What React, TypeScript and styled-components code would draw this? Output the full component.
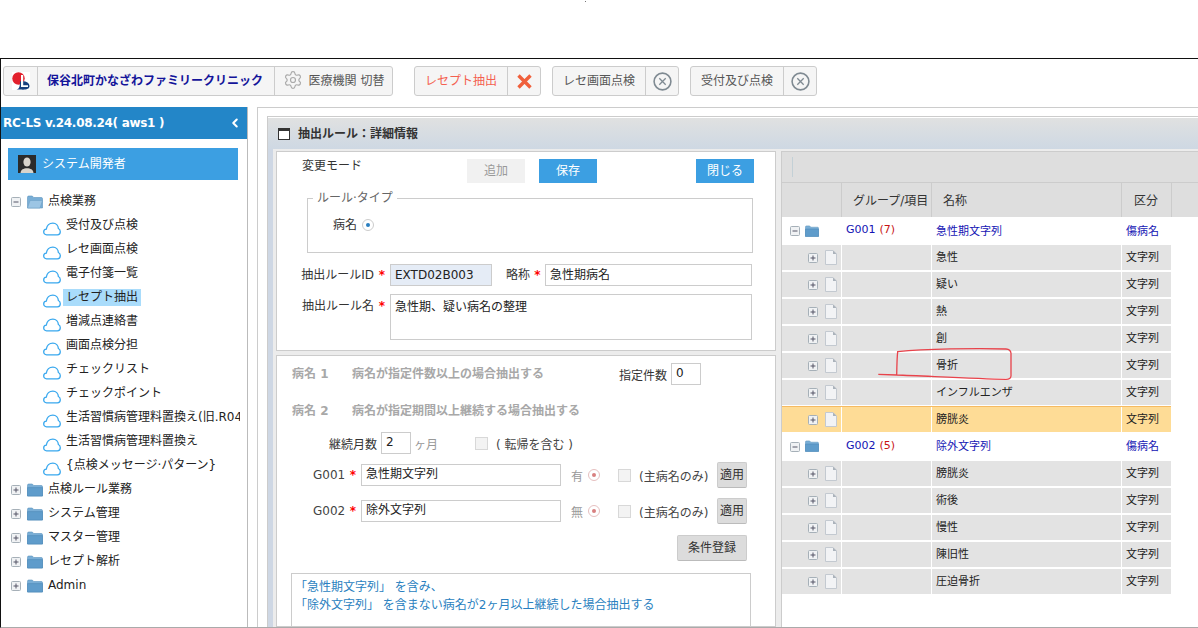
import React from 'react';
import styled, { createGlobalStyle } from 'styled-components';
import { ChevronLeft, Settings } from 'lucide-react';

const GlobalStyle = createGlobalStyle`
  html, body {
    margin: 0;
    padding: 0;
    height: 628px;
    overflow: hidden;
    background: #fff;
    font-family: "DejaVu Sans", "Noto Sans CJK JP", sans-serif;
    font-size: 12px;
    color: #222;
  }
  * { box-sizing: border-box; }
`;

const Page = styled.div`
  position: relative;
  width: 1198px;
  height: 628px;
  overflow: hidden;
`;

const TopBlank = styled.div`
  height: 58px;
  padding: 1px 0 0 585px;
`;

const Speck = styled.div`
  width: 1px;
  height: 1px;
  background: #777;
`;

const Frame = styled.div`
  height: 570px;
  border-top: 1px solid #111;
  border-left: 1px solid #111;
  border-bottom: 1px solid #aaa;
  display: flex;
  flex-direction: column;
`;

const Toolbar = styled.div`
  height: 48px;
  flex: none;
  display: flex;
  padding: 7px 0 0 2px;
  gap: 11px;
`;

const ToolGroup = styled.div<{ $first?: boolean }>`
  height: 30px;
  display: flex;
  align-items: stretch;
  background: #f5f5f5;
  border: 1px solid #ccc;
  border-radius: 3px;
  margin-right: ${p => (p.$first ? '10px' : '0')};
`;

const ToolCell = styled.div<{ $w: number; $tone?: 'name' | 'danger'; $icon?: boolean }>`
  width: ${p => p.$w}px;
  display: flex;
  align-items: center;
  justify-content: center;
  gap: 6px;
  padding: 0 ${p => (p.$tone === 'name' ? '2px' : '0')} ${p => (p.$icon ? '0' : '3px')} 0;
  white-space: nowrap;
  font-weight: ${p => (p.$tone === 'name' ? 700 : 400)};
  color: ${p => (p.$tone === 'name' ? '#14149a' : p.$tone === 'danger' ? '#f4604f' : '#555')};
  & + & { border-left: 1px solid #ccc; }
  svg { flex: none; }
`;

const Main = styled.div`
  flex: 1;
  min-height: 0;
  display: flex;
`;

const Sidebar = styled.aside`
  width: 247px;
  flex: none;
  border-right: 1px solid #bbb;
`;

const SideHeader = styled.div`
  height: 32px;
  background: #2386c8;
  color: #fff;
  display: flex;
  align-items: center;
  justify-content: space-between;
  padding: 0 5px 0 2px;
  font-size: 12px;
  font-weight: 700;
  letter-spacing: -0.3px;
`;

const UserBlock = styled.div`
  margin: 9px 9px 0 7px;
  height: 32px;
  background: #3c9fe2;
  color: #fff;
  display: flex;
  align-items: center;
  gap: 6px;
  padding-left: 10px;
  span { margin-bottom: 4px; }
`;

const Tree = styled.div`
  margin-top: 10px;
`;

const TreeRow = styled.div<{ $child?: boolean }>`
  height: 24px;
  display: flex;
  align-items: center;
  padding-left: ${p => (p.$child ? '42px' : '10px')};
  gap: ${p => (p.$child ? '2px' : '6px')};
  color: #222;
`;

const TreeLabel = styled.span<{ $active?: boolean; $root?: boolean }>`
  padding: 0 3px;
  margin-left: ${p => (p.$root ? '-4px' : '0')};
  margin-top: -1px;
  line-height: 17px;
  max-width: 177px;
  overflow: hidden;
  white-space: nowrap;
  background: ${p => (p.$active ? '#a9dcfb' : 'transparent')};
`;

const Content = styled.div`
  flex: 1;
  min-width: 0;
  margin-left: 9px;
  border-left: 1px solid #ccc;
  border-top: 1px solid #ccc;
  padding: 8px 0 0 9px;
`;

const Panel = styled.section`
  height: 100%;
  border: 1px solid #ccc;
  border-bottom: 0;
  border-right: 0;
  display: flex;
  flex-direction: column;
`;

const PanelHead = styled.div`
  height: 31px;
  flex: none;
  margin-top: 1px;
  display: flex;
  align-items: center;
  gap: 8px;
  padding-left: 10px;
  background: linear-gradient(#e0e1e1, #ced8e3);
  color: #333;
  font-weight: 700;
  span { margin-bottom: 2px; }
`;

const PanelBody = styled.div`
  flex: 1;
  min-height: 0;
  display: flex;
  background: #ececec;
  border-left: 5px solid #ced7e4;
  padding: 2px 0 0 3px;
  overflow: hidden;
`;

const LeftColumn = styled.div`
  width: 500px;
  flex: none;
  display: flex;
  flex-direction: column;
  gap: 4px;
`;

const Card = styled.div<{ $h?: number }>`
  background: #fff;
  border: 1px solid #ccc;
  height: ${p => (p.$h ? `${p.$h}px` : 'auto')};
  flex: ${p => (p.$h ? 'none' : '1')};
  min-height: 0;
  overflow: hidden;
`;

const ActionRow = styled.div`
  display: flex;
  margin-top: 7px;
`;

const ModeLabel = styled.div`
  width: 165px;
  margin-left: 25px;
  line-height: 14px;
  color: #333;
`;

const ActionButton = styled.div<{ $off?: boolean; $gap?: number }>`
  width: 58px;
  height: 24px;
  margin-left: ${p => p.$gap ?? 0}px;
  display: flex;
  align-items: center;
  justify-content: center;
  padding-bottom: 3px;
  background: ${p => (p.$off ? '#f1f1f1' : '#3c9fe2')};
  color: ${p => (p.$off ? '#999' : '#fff')};
`;

const TypeBox = styled.fieldset`
  margin: 8px 0 0 30px;
  padding: 0;
  width: 446px;
  height: 62px;
  border: 1px solid #ccc;
`;

const TypeLegend = styled.legend`
  margin-left: 5px;
  padding: 0 4px;
  line-height: 14px;
  color: #666;
`;

const TypeRow = styled.div`
  margin: 13px 0 0 25px;
  display: flex;
  align-items: center;
  gap: 5px;
  line-height: 14px;
  color: #333;
`;

const RadioMark = styled.span<{ $faded?: boolean; $gap?: number }>`
  width: 12px;
  height: 12px;
  flex: none;
  margin-left: ${p => p.$gap ?? 0}px;
  border-radius: 50%;
  border: 1px solid ${p => (p.$faded ? '#e6c0c0' : '#ccc')};
  display: flex;
  align-items: center;
  justify-content: center;
  &::after {
    content: '';
    width: 4px;
    height: 4px;
    border-radius: 50%;
    background: ${p => (p.$faded ? '#d98080' : '#2a7fc0')};
  }
`;

const FieldRow = styled.div<{ $top: number; $left?: number; $start?: boolean }>`
  display: flex;
  align-items: ${p => (p.$start ? 'flex-start' : 'center')};
  margin: ${p => p.$top}px 0 0 ${p => p.$left ?? 0}px;
`;

const FieldLabel = styled.div<{ $w: number; $gap?: number; $top?: number }>`
  width: ${p => p.$w}px;
  flex: none;
  margin-left: ${p => p.$gap ?? 0}px;
  padding-top: ${p => p.$top ?? 0}px;
  line-height: 14px;
  text-align: right;
  white-space: nowrap;
  color: #333;
`;

const Star = styled.span<{ $w: number; $top?: number }>`
  width: ${p => p.$w}px;
  flex: none;
  padding-top: ${p => p.$top ?? 0}px;
  line-height: 14px;
  text-align: center;
  color: #f00;
  font-weight: 700;
`;

const Field = styled.div<{ $w: number; $h?: number; $locked?: boolean; $tight?: boolean; $gap?: number }>`
  width: ${p => p.$w}px;
  height: ${p => p.$h ?? 22}px;
  flex: none;
  margin-left: ${p => p.$gap ?? 0}px;
  border: 1px solid #ccc;
  background: ${p => (p.$locked ? '#e5ecf6' : '#fff')};
  padding: ${p => (p.$h ? '4px 4px' : '0 4px')};
  line-height: ${p => (p.$h ? '16px' : p.$tight ? '18px' : '20px')};
  color: #222;
  white-space: nowrap;
`;

const Rule = styled.div<{ $w: number }>`
  width: ${p => p.$w}px;
  height: 22px;
  line-height: 22px;
  flex: none;
  font-weight: 700;
  color: #a8a8a8;
  white-space: nowrap;
`;

const Plain = styled.span<{ $gap?: number; $w?: number; $tone?: string }>`
  flex: none;
  width: ${p => (p.$w ? `${p.$w}px` : 'auto')};
  margin-left: ${p => p.$gap ?? 0}px;
  color: ${p => p.$tone ?? '#444'};
  white-space: nowrap;
`;

const CheckBox = styled.span<{ $gap: number }>`
  width: 13px;
  height: 13px;
  flex: none;
  margin-left: ${p => p.$gap}px;
  background: #f3f3f3;
  border: 1px solid #d8d8d8;
`;

const GrayButton = styled.div<{ $w: number; $gap?: number; $inline?: boolean }>`
  width: ${p => p.$w}px;
  height: 26px;
  flex: none;
  margin: ${p => (p.$inline ? '-2px' : '0')} 0 ${p => (p.$inline ? '-2px' : '0')} ${p => p.$gap ?? 0}px;
  display: flex;
  align-items: center;
  justify-content: center;
  padding-bottom: 3px;
  background: #dcdcdc;
  border: 1px solid #ccc;
  border-bottom-color: #bbb;
  border-radius: 2px;
  color: #333;
`;

const NoteBox = styled.div`
  margin: 12px 0 0 14px;
  width: 460px;
  height: 90px;
  border: 1px solid #ccc;
  padding: 4px 3px;
  line-height: 18px;
  color: #2a7fc0;
`;

const GridPanel = styled.div`
  flex: 1;
  min-width: 0;
  margin-left: 5px;
  background: #fff;
  border-left: 1px solid #ccc;
  border-top: 1px solid #ccc;
`;

const GridTools = styled.div`
  height: 31px;
  display: flex;
  align-items: center;
  padding-left: 10px;
  background: #dedede;
  border-bottom: 1px solid #ccc;
  &::before {
    content: '';
    width: 1px;
    height: 20px;
    background: #c3d0d6;
  }
`;

const GridHead = styled.div`
  height: 34px;
  display: grid;
  grid-template-columns: 60px 90px 190px 50px 1fr;
  background: #dedede;
`;

const HeadCell = styled.div<{ $pad?: number }>`
  display: flex;
  align-items: center;
  padding-left: ${p => p.$pad ?? 0}px;
  padding-bottom: 2px;
  border-right: 1px solid #ccc;
  white-space: nowrap;
  color: #333;
  &:last-child { border-right: 0; }
`;

const GridRow = styled.div<{ $kind: 'group' | 'item' | 'picked'; $h?: number }>`
  height: ${p => p.$h ?? 25}px;
  width: 389px;
  margin-bottom: ${p => (p.$kind === 'group' ? 0 : 2)}px;
  display: grid;
  grid-template-columns: 59px 89px 189px 49px;
  gap: 1px;
  font-size: 11px;
  color: ${p => (p.$kind === 'group' ? '#1414b4' : '#222')};
  ${p => p.$kind === 'picked' && 'margin-bottom: 0; border-top: 1px solid #f6bb62; margin-top: -1px; height: 26px;'}
`;

const GridCell = styled.div<{ $kind: 'group' | 'item' | 'picked'; $pad?: number; $gap?: number }>`
  display: flex;
  align-items: center;
  gap: ${p => p.$gap ?? 5}px;
  padding-left: ${p => p.$pad ?? 4}px;
  padding-bottom: ${p => (p.$pad ? 0 : 3)}px;
  white-space: nowrap;
  background: ${p => (p.$kind === 'group' ? '#fff' : p.$kind === 'picked' ? '#fedc96' : '#e3e3e3')};
`;

const Count = styled.span`
  color: #c81414;
  margin-left: 4px;
`;

const Scribble = styled.svg`
  position: absolute;
  left: 875px;
  top: 345px;
  pointer-events: none;
`;

const Expander: React.FC<{ open?: boolean }> = ({ open }) => (
  <svg width="10" height="10" viewBox="0 0 10 10" style={{ flex: 'none' }}>
    <rect x="0.5" y="0.5" width="9" height="9" rx="1" fill="#f0f2f4" stroke="#a6b0b8" />
    <path d={open ? 'M2.5 5h5' : 'M2.5 5h5M5 2.5v5'} stroke="#556" strokeWidth="1" />
  </svg>
);

const Folder: React.FC<{ open?: boolean; w?: number }> = ({ open, w = 16 }) => (
  <svg width={w} height={w * 0.875} viewBox="0 0 16 14" style={{ flex: 'none' }}>
    <path d="M0.5 2.2C0.5 1.5 1 1 1.7 1h3.6l1.4 1.5h7.6c.7 0 1.2.5 1.2 1.2V13H.5z" fill="#79aed6" stroke="#5c93bd" strokeWidth="0.6" />
    {open ? (
      <path d="M3 5.5h12.5L13 13H.5z" fill="#9cc5e4" stroke="#6ea1c8" strokeWidth="0.6" />
    ) : (
      <path d="M.5 4.6h15V13H.5z" fill="#5f9ccb" stroke="#4f8ab8" strokeWidth="0.6" />
    )}
  </svg>
);

const CloudMark = () => (
  <svg width="18" height="14" viewBox="0 0 18 14" fill="none" style={{ flex: 'none', marginTop: 5 }}>
    <path
      d="M3.6 12.8C1.7 12.8.7 11.3.7 9.9.7 8.3 1.9 7.2 3.3 7.1 3.9 3.6 6.6 1.1 9.9 1.1 13 1.1 15.2 3.6 15.4 6.5 16.6 7.1 17.3 8.3 17.3 9.8 17.3 11.6 16 12.8 14.4 12.8Z"
      stroke="#39a8ee"
      strokeWidth="1.3"
    />
  </svg>
);

const DocIcon = () => (
  <svg width="12" height="15" viewBox="0 0 12 15" style={{ flex: 'none' }}>
    <path d="M.5.5h7.5l3.5 3.5v10.5H.5z" fill="#f2f3f5" stroke="#c3c9d0" />
    <path d="M8 .5v3.5h3.5z" fill="#aab2ba" />
  </svg>
);

const Logo = () => (
  <svg width="18" height="18" viewBox="0 0 18 18">
    <rect width="18" height="18" fill="#fff" />
    <circle cx="6.5" cy="6.5" r="6.2" fill="#e2202c" />
    <path d="M8 9.5c5-1 9.5 1 9.5 4.5S13 18 8 17.5h-3.5c2-.6 3.5-1.5 3.5-8z" fill="#17407e" />
    <path d="M9 3h2.2v10.2H16v1.8H9z" fill="#fff" />
  </svg>
);

const RedCross = () => (
  <svg width="15" height="15" viewBox="0 0 15 15">
    <path d="M1.5 1.5l12 12M13.5 1.5l-12 12" stroke="#f0603c" strokeWidth="3.4" />
  </svg>
);

const CircleCross = () => (
  <svg width="19" height="19" viewBox="0 0 19 19">
    <circle cx="9.5" cy="9.5" r="8.4" fill="#f5f5f5" stroke="#7f8a92" strokeWidth="1.6" />
    <path d="M6.3 6.3l6.4 6.4M12.7 6.3l-6.4 6.4" stroke="#7f8a92" strokeWidth="1.3" />
  </svg>
);

const Avatar = () => (
  <svg width="18" height="18" viewBox="0 0 18 18" style={{ flex: 'none' }}>
    <rect width="18" height="18" fill="#2b2b2b" />
    <ellipse cx="9" cy="7" rx="3.6" ry="4.6" fill="#d9d4cc" />
    <path d="M2.5 18c.3-3.6 3-4.6 6.5-4.8 3.5.2 6.2 1.2 6.5 4.8z" fill="#d9d4cc" />
  </svg>
);

const PanelIcon = () => (
  <svg width="12" height="12" viewBox="0 0 12 12">
    <rect x="0.5" y="0.5" width="11" height="11" fill="#fff" stroke="#333" />
    <rect width="12" height="3" fill="#333" />
  </svg>
);

const checkItems = [
  '受付及び点検',
  'レセ画面点検',
  '電子付箋一覧',
  'レセプト抽出',
  '増減点連絡書',
  '画面点検分担',
  'チェックリスト',
  'チェックポイント',
  '生活習慣病管理料置換え(旧.R04',
  '生活習慣病管理料置換え',
  '{点検メッセージ·パターン}',
];

const closedRoots = ['点検ルール業務', 'システム管理', 'マスター管理', 'レセプト解析', 'Admin'];

const group1 = ['急性', '疑い', '熱', '創', '骨折', 'インフルエンザ'];
const group2 = ['膀胱炎', '術後', '慢性', '陳旧性', '圧迫骨折'];

const ItemRow: React.FC<{ name: string; picked?: boolean }> = ({ name, picked }) => {
  const kind = picked ? 'picked' : 'item';
  return (
    <GridRow $kind={kind}>
      <GridCell $kind={kind} $pad={26} $gap={7}>
        <Expander />
        <DocIcon />
      </GridCell>
      <GridCell $kind={kind} />
      <GridCell $kind={kind}>{name}</GridCell>
      <GridCell $kind={kind}>文字列</GridCell>
    </GridRow>
  );
};

const GroupRow: React.FC<{ code: string; count: number; name: string; h: number }> = ({ code, count, name, h }) => (
  <GridRow $kind="group" $h={h}>
    <GridCell $kind="group" $pad={8}>
      <Expander open />
      <Folder w={14} />
    </GridCell>
    <GridCell $kind="group">
      <span>
        {code}
        <Count>({count})</Count>
      </span>
    </GridCell>
    <GridCell $kind="group">{name}</GridCell>
    <GridCell $kind="group">傷病名</GridCell>
  </GridRow>
);

const App: React.FC = () => (
  <Page>
    <GlobalStyle />
    <TopBlank>
      <Speck />
    </TopBlank>
    <Frame>
      <Toolbar>
        <ToolGroup $first>
          <ToolCell $w={33} $icon>
            <Logo />
          </ToolCell>
          <ToolCell $w={237} $tone="name">保谷北町かなざわファミリークリニック</ToolCell>
          <ToolCell $w={118}>
            <Settings size={20} color="#aaa" strokeWidth={1.4} />
            医療機関 切替
          </ToolCell>
        </ToolGroup>
        <ToolGroup>
          <ToolCell $w={92} $tone="danger">レセプト抽出</ToolCell>
          <ToolCell $w={33} $icon>
            <RedCross />
          </ToolCell>
        </ToolGroup>
        <ToolGroup>
          <ToolCell $w={92}>レセ画面点検</ToolCell>
          <ToolCell $w={33} $icon>
            <CircleCross />
          </ToolCell>
        </ToolGroup>
        <ToolGroup>
          <ToolCell $w={92}>受付及び点検</ToolCell>
          <ToolCell $w={33} $icon>
            <CircleCross />
          </ToolCell>
        </ToolGroup>
      </Toolbar>
      <Main>
        <Sidebar>
          <SideHeader>
            RC-LS v.24.08.24( aws1 )
            <ChevronLeft size={14} strokeWidth={3.5} />
          </SideHeader>
          <UserBlock>
            <Avatar />
            <span>システム開発者</span>
          </UserBlock>
          <Tree>
            <TreeRow>
              <Expander open />
              <Folder open />
              <TreeLabel $root>点検業務</TreeLabel>
            </TreeRow>
            {checkItems.map(item => (
              <TreeRow $child key={item}>
                <CloudMark />
                <TreeLabel $active={item === 'レセプト抽出'}>{item}</TreeLabel>
              </TreeRow>
            ))}
            {closedRoots.map(item => (
              <TreeRow key={item}>
                <Expander />
                <Folder />
                <TreeLabel $root>{item}</TreeLabel>
              </TreeRow>
            ))}
          </Tree>
        </Sidebar>
        <Content>
          <Panel>
            <PanelHead>
              <PanelIcon />
              <span>抽出ルール：詳細情報</span>
            </PanelHead>
            <PanelBody>
              <LeftColumn>
                <Card $h={200}>
                  <ActionRow>
                    <ModeLabel>変更モード</ModeLabel>
                    <ActionButton $off>追加</ActionButton>
                    <ActionButton $gap={14}>保存</ActionButton>
                    <ActionButton $gap={99}>閉じる</ActionButton>
                  </ActionRow>
                  <TypeBox>
                    <TypeLegend>ルール·タイプ</TypeLegend>
                    <TypeRow>
                      病名
                      <RadioMark />
                    </TypeRow>
                  </TypeBox>
                  <FieldRow $top={11}>
                    <FieldLabel $w={97}>抽出ルールID</FieldLabel>
                    <Star $w={16}>*</Star>
                    <Field $w={102} $locked>EXTD02B003</Field>
                    <FieldLabel $w={24} $gap={14}>略称</FieldLabel>
                    <Star $w={15}>*</Star>
                    <Field $w={207}>急性期病名</Field>
                  </FieldRow>
                  <FieldRow $top={8} $start>
                    <FieldLabel $w={97} $top={5}>抽出ルール名</FieldLabel>
                    <Star $w={16} $top={5}>*</Star>
                    <Field $w={362} $h={46}>急性期、疑い病名の整理</Field>
                  </FieldRow>
                </Card>
                <Card>
                  <FieldRow $top={7} $left={15}>
                    <Rule $w={60}>病名 1</Rule>
                    <Rule $w={267}>病名が指定件数以上の場合抽出する</Rule>
                    <Plain $tone="#333">指定件数</Plain>
                    <Field $w={30} $gap={4} $tight>0</Field>
                  </FieldRow>
                  <FieldRow $top={15} $left={15}>
                    <Rule $w={60}>病名 2</Rule>
                    <Rule $w={320}>病名が指定期間以上継続する場合抽出する</Rule>
                  </FieldRow>
                  <FieldRow $top={10} $left={52}>
                    <Plain $tone="#333">継続月数</Plain>
                    <Field $w={30} $gap={4} $tight>2</Field>
                    <Plain $gap={3} $tone="#999">ヶ月</Plain>
                    <CheckBox $gap={37} />
                    <Plain $gap={8}>( 転帰を含む )</Plain>
                  </FieldRow>
                  <FieldRow $top={10} $left={36}>
                    <Plain $w={32}>G001</Plain>
                    <Star $w={16}>*</Star>
                    <Field $w={200} $tight>急性期文字列</Field>
                    <Plain $gap={10} $tone="#999">有</Plain>
                    <RadioMark $faded $gap={5} />
                    <CheckBox $gap={18} />
                    <Plain $gap={8} $w={72}>(主病名のみ)</Plain>
                    <GrayButton $w={30} $gap={6} $inline>適用</GrayButton>
                  </FieldRow>
                  <FieldRow $top={14} $left={36}>
                    <Plain $w={32}>G002</Plain>
                    <Star $w={16}>*</Star>
                    <Field $w={200} $tight>除外文字列</Field>
                    <Plain $gap={10} $tone="#999">無</Plain>
                    <RadioMark $faded $gap={5} />
                    <CheckBox $gap={18} />
                    <Plain $gap={8} $w={72}>(主病名のみ)</Plain>
                    <GrayButton $w={30} $gap={6} $inline>適用</GrayButton>
                  </FieldRow>
                  <FieldRow $top={13} $left={400}>
                    <GrayButton $w={70}>条件登録</GrayButton>
                  </FieldRow>
                  <NoteBox>
                    「急性期文字列」 を含み、
                    <br />
                    「除外文字列」 を含まない病名が2ヶ月以上継続した場合抽出する
                  </NoteBox>
                </Card>
              </LeftColumn>
              <GridPanel>
                <GridTools />
                <GridHead>
                  <HeadCell />
                  <HeadCell $pad={11}>グループ/項目</HeadCell>
                  <HeadCell $pad={11}>名称</HeadCell>
                  <HeadCell $pad={12}>区分</HeadCell>
                  <HeadCell />
                </GridHead>
                <GroupRow code="G001" count={7} name="急性期文字列" h={28} />
                {group1.map(name => (
                  <ItemRow key={name} name={name} />
                ))}
                <ItemRow name="膀胱炎" picked />
                <GroupRow code="G002" count={5} name="除外文字列" h={29} />
                {group2.map(name => (
                  <ItemRow key={name} name={name} />
                ))}
              </GridPanel>
            </PanelBody>
          </Panel>
        </Content>
      </Main>
    </Frame>
    <Scribble width="140" height="36" viewBox="875 345 140 36" fill="none">
      <path
        d="M878.3 374.3L896.7 375C896.9 363 897 357 897.7 351.7C925 349 975 348 1006 349C1009.5 349.3 1010.8 350.5 1011 353.3L1011 376C1010.8 378.6 1009.5 379.3 1006 379.3C975 378.7 925 376 896.7 375"
        stroke="#e8434b"
        strokeWidth="1.3"
      />
    </Scribble>
  </Page>
);

export default App;
